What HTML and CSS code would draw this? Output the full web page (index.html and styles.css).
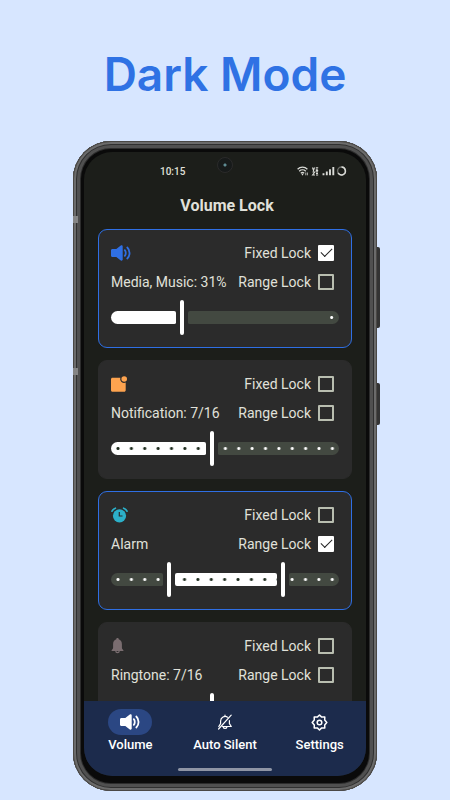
FILE: index.html
```
<!DOCTYPE html>
<html lang="en">
<head>
    <meta charset="utf-8">
    <meta name="viewport" content="width=device-width, initial-scale=1">
    <title>Volume Lock - Dark Mode</title>
    <link rel="stylesheet" href="styles.css">
</head>
<body>
    <h1>Dark Mode</h1>

    <div class="phone">
        <span class="side-button power"></span>
        <span class="side-button volume"></span>
        <span class="antenna antenna-top"></span>
        <span class="antenna antenna-mid"></span>

        <div class="screen">
            <span class="camera"></span>

            <div class="status-bar">
                <span>10:15</span>
                <svg width="50" height="12" viewBox="0 0 50 12" fill="none" stroke="#d9dad6">
                    <path d="M.6 4.2a7 7 0 0 1 9.8 0M2.2 6.2a4.8 4.8 0 0 1 6.6 0M3.8 8.2a2.6 2.6 0 0 1 3.4 0" stroke-width="1.3"/>
                    <circle cx="5.5" cy="9.6" r=".8" fill="#d9dad6" stroke="none"/>
                    <path d="M8.8 7.5v2.8M10.4 7.5v2.8" stroke-width=".8"/>
                    <path d="M15.5 2.5l1 3 1-3M18.8 2.7h2.4M18.8 4.2h2M18.8 5.6h2.4M15.5 7h2.3l-2.2 3h2.4M19 7h2M19 8.500h2M19 10h2.200" stroke-width="1.100"/>
                    <path d="M26.5 10.3v-2M29.8 10.3V6.500M33 10.300V4.300M36.300 10.300V2" stroke-width="1.900"/>
                    <circle cx="44.500" cy="6" r="3.900" stroke-width="1.500" stroke="#6a6c67"/>
                    <path d="M44.500 2.100a3.900 3.900 0 1 1-3.400 5.800" stroke-width="1.500"/>
                </svg>
            </div>

            <h2>Volume Lock</h2>

            <main>
                <section class="card active">
                    <div class="row">
                        <svg class="icon" width="20" height="16" viewBox="0 0 20 16" fill="#2f6fe4">
                            <path d="M1.500 4h3.800L9.800.6c.8-.6 1.900-.2 1.900.9v13c0 1.100-1.100 1.500-1.900.9L5.300 12H1.500C.5 12 0 11.400 0 10.500v-5C0 4.600.500 4 1.500 4z"/>
                            <path d="M13.800 5.200c1.300 1.400 1.300 4.200 0 5.600M16.300 2.500c3 2.800 3 8.200 0 11" fill="none" stroke="#2f6fe4" stroke-width="1.800" stroke-linecap="round"/>
                        </svg>
                        <label>Fixed Lock <input type="checkbox" checked></label>
                    </div>
                    <div class="row">
                        <span>Media, Music: 31%</span>
                        <label>Range Lock <input type="checkbox"></label>
                    </div>
                    <div class="slider plain" style="--to: 0.3">
                        <div class="track"><i class="low on"></i><i class="high"></i></div>
                        <input type="range" min="0" max="100" value="30" aria-label="Media volume">
                    </div>
                </section>

                <section class="card">
                    <div class="row">
                        <svg class="icon" width="17" height="16" viewBox="0 0 17 16" fill="#fda34f">
                            <path d="M1.500 1.800h7.800a4 4 0 0 0 5.400 4.800v7.600c0 .9-.600 1.500-1.500 1.500H1.500C.600 15.700 0 15.100 0 14.200V3.300c0-.9.600-1.500 1.500-1.500z"/>
                            <circle cx="13.200" cy="3" r="2.800"/>
                        </svg>
                        <label>Fixed Lock <input type="checkbox"></label>
                    </div>
                    <div class="row">
                        <span>Notification: 7/16</span>
                        <label>Range Lock <input type="checkbox"></label>
                    </div>
                    <div class="slider" style="--to: 0.4375">
                        <div class="track"><i class="low on"></i><i class="high"></i></div>
                        <input type="range" min="0" max="16" value="7" aria-label="Notification volume">
                    </div>
                </section>

                <section class="card active">
                    <div class="row">
                        <svg class="icon" width="17" height="16" viewBox="0 0 17 16">
                            <circle cx="8.500" cy="8.800" r="6.600" fill="#2cb0c9"/>
                            <path d="M1 4.200A6 6 0 0 1 4.400 1.200M16 4.200a6 6 0 0 0-3.400-3" fill="none" stroke="#2cb0c9" stroke-width="1.700" stroke-linecap="round"/>
                            <path d="M8.300 5v4h3.200" fill="none" stroke="#2b2b2b" stroke-width="1.200"/>
                        </svg>
                        <label>Fixed Lock <input type="checkbox"></label>
                    </div>
                    <div class="row">
                        <span>Alarm</span>
                        <label>Range Lock <input type="checkbox" checked></label>
                    </div>
                    <div class="slider range" style="--from: 0.24; --to: 0.77">
                        <div class="track"><i class="low"></i><i class="mid on"></i><i class="high"></i></div>
                        <input type="range" min="0" max="100" value="24" aria-label="Alarm minimum volume">
                        <input type="range" min="0" max="100" value="77" aria-label="Alarm maximum volume">
                    </div>
                </section>

                <section class="card">
                    <div class="row">
                        <svg class="icon" width="13" height="16" viewBox="0 0 13 16" fill="#7a6d70">
                            <path d="M6.500 0c.8 0 1.200.5 1.200 1.300 2 .6 3.200 2.300 3.200 4.600v3.600c0 1.200.6 1.900 1.500 2.700v.9H.600v-.9c.900-.8 1.500-1.500 1.500-2.700V5.900c0-2.300 1.200-4 3.200-4.600C5.300.5 5.700 0 6.500 0z"/>
                            <path d="M4.800 13a1.700 1.700 0 0 0 3.400 0" fill="none" stroke="#7a6d70" stroke-width="1.200"/>
                        </svg>
                        <label>Fixed Lock <input type="checkbox"></label>
                    </div>
                    <div class="row">
                        <span>Ringtone: 7/16</span>
                        <label>Range Lock <input type="checkbox"></label>
                    </div>
                    <div class="slider" style="--to: 0.4375">
                        <div class="track"><i class="low on"></i><i class="high"></i></div>
                        <input type="range" min="0" max="16" value="7" aria-label="Ringtone volume">
                    </div>
                </section>
            </main>

            <nav>
                <a href="#volume" class="current">
                    <span class="pill">
                        <svg width="20" height="16" viewBox="0 0 20 16" fill="#fff">
                            <path d="M1.500 4h3.800L9.800.6c.8-.6 1.900-.2 1.900.9v13c0 1.100-1.100 1.500-1.900.9L5.300 12H1.500C.5 12 0 11.400 0 10.500v-5C0 4.600.500 4 1.500 4z"/>
                            <path d="M13.800 5.200c1.300 1.400 1.300 4.200 0 5.600M16.300 2.500c3 2.800 3 8.200 0 11" fill="none" stroke="#fff" stroke-width="1.800" stroke-linecap="round"/>
                        </svg>
                    </span>
                    Volume
                </a>
                <a href="#auto-silent">
                    <span class="pill">
                        <svg width="16" height="16" viewBox="0 0 16 16" fill="none" stroke="#fff" stroke-width="1.200" stroke-linecap="round" stroke-linejoin="round">
                            <path d="M10.600 3.200A4.600 4.600 0 0 0 3.600 7v2.600L1.800 12.500M5.500 12.500h8.800L12.400 9.600V6.500M6.200 13a1.900 1.900 0 0 0 3.700 0M8 1.200v1M14.200 1.200L1.600 15"/>
                        </svg>
                    </span>
                    Auto Silent
                </a>
                <a href="#settings">
                    <span class="pill">
                        <svg width="17" height="17" viewBox="0 0 17 17" fill="none" stroke="#fff" stroke-width="1.500" stroke-linejoin="round">
                            <path d="M8.500 1l2.200 2.100 3.100-.1-.1 3.100 2.100 2.400-2.100 2.400.1 3.100-3.100-.1-2.200 2.100-2.200-2.100-3.100.1.1-3.100L1.200 8.500l2.100-2.400L3.200 3l3.100.1z"/>
                            <circle cx="8.500" cy="8.500" r="2.300"/>
                        </svg>
                    </span>
                    Settings
                </a>
                <span class="home-bar"></span>
            </nav>
        </div>
    </div>
</body>
</html>
```
FILE: styles.css
```
* {
    box-sizing: border-box;
}

body {
    margin: 0;
    padding: 44px 16px 9px;
    height: 100vh;
    display: flex;
    flex-direction: column;
    align-items: center;
    background-color: #d7e6ff;
    font-family: Roboto, "Liberation Sans", sans-serif;
}

h1 {
    margin: 0 0 37px;
    font-family: Inter, "Open Sans", sans-serif;
    font-size: 46px;
    font-weight: 600;
    line-height: 60px;
    color: #2f72e4;
}

/* Phone frame */
.phone {
    position: relative;
    flex: 1;
    min-height: 0;
    width: 100%;
    max-width: 304px;
    padding: 11px 11px 15px;
    border-radius: 38px;
    background-color: #0a0a0a;
    box-shadow:
        inset 0 0 0 1px #4a4845,
        inset 0 0 0 3px #6b6b6b,
        inset 0 0 0 4px #303030,
        inset 0 0 0 7px #505050,
        inset 0 0 0 8px #2c2c2c;
}

.side-button {
    position: absolute;
    left: 100%;
    width: 3px;
    border-radius: 0 2px 2px 0;
    background-color: #333;
}

.power {
    top: 106px;
    height: 81px;
}

.volume {
    top: 242px;
    height: 42px;
}

.antenna {
    position: absolute;
    left: 0;
    width: 5px;
    height: 7px;
    background-color: #858585;
}

.antenna-top {
    top: 75px;
}

.antenna-mid {
    top: 227px;
}

.screen {
    position: relative;
    height: 100%;
    display: flex;
    flex-direction: column;
    overflow: hidden;
    border-radius: 28px;
    background-color: #1c1e1a;
    color: #e0e1da;
}

.camera {
    position: absolute;
    top: 5px;
    left: 50%;
    width: 16px;
    height: 16px;
    margin-left: -8px;
    border: 1px solid #2b2b2b;
    border-radius: 50%;
    background: radial-gradient(circle, #5e8b93 1px, #171a1a 2px);
}

.status-bar {
    display: flex;
    justify-content: space-between;
    align-items: center;
    height: 38px;
    padding: 0 19px 0 76px;
    font-size: 10px;
    font-weight: 500;
}

h2 {
    margin: 0;
    padding-left: 4px;
    font-size: 16px;
    font-weight: 700;
    line-height: 32px;
    text-align: center;
}

main {
    flex: 1;
    min-height: 0;
    overflow: hidden;
    display: flex;
    flex-direction: column;
    gap: 12px;
    padding: 7px 14px 0;
}

/* Volume cards */
.card {
    flex: none;
    padding: 8px 12px 12px;
    border: 1px solid #2b2b2b;
    border-radius: 9px;
    background-color: #2b2b2b;
}

.card.active {
    border-color: #2f6fe4;
}

.row {
    display: flex;
    justify-content: space-between;
    align-items: center;
    height: 29px;
    padding-right: 5px;
    font-size: 14px;
    white-space: nowrap;
}

.row label {
    display: flex;
    align-items: center;
    gap: 7px;
}

.icon {
    overflow: visible;
}

input[type="checkbox"] {
    appearance: none;
    width: 16px;
    height: 16px;
    margin: 0;
    border: 2px solid #b9beb0;
    border-radius: 1px;
}

input[type="checkbox"]:checked {
    display: grid;
    place-items: center;
    border-color: #fff;
    background-color: #fff;
}

input[type="checkbox"]:checked::after {
    content: "";
    width: 10px;
    height: 5px;
    margin-bottom: 3px;
    border: solid #222;
    border-width: 0 0 1px 1px;
    transform: rotate(-45deg);
}

/* Sliders: the track is drawn by the segments, the inputs draw the handles */
.slider {
    position: relative;
    container-type: inline-size;
    height: 35px;
    margin-top: 4px;
}

.track {
    --run: calc(100cqw - 14px);
    --step: calc(var(--run) / 16);
    --shift: calc(7px - var(--step) / 2);
    display: grid;
    grid-template-columns: calc(1px + var(--run) * var(--to)) 1fr;
    column-gap: 12px;
    align-items: center;
    height: 35px;
}

.range .track {
    grid-template-columns: calc(1px + var(--run) * var(--from)) calc(var(--run) * (var(--to) - var(--from)) - 12px) 1fr;
}

.track i {
    height: 13px;
    border-radius: 2px;
    background-color: #434941;
    background-image: radial-gradient(circle, #fff 1px, transparent 2px);
    background-size: var(--step) 100%;
}

.track .low {
    border-radius: 7px 2px 2px 7px;
    background-position-x: var(--shift);
}

.track .mid {
    background-position-x: calc(var(--shift) - 13px - var(--run) * var(--from));
}

.track .high {
    border-radius: 2px 7px 7px 2px;
    background-position-x: calc(100% - var(--shift));
}

.track .on {
    background-color: #fff;
    background-image: radial-gradient(circle, #1c2a1c 1px, transparent 2px);
}

.plain .low {
    background-image: none;
}

.plain .high {
    background-repeat: no-repeat;
}

input[type="range"] {
    appearance: none;
    position: absolute;
    inset: 0;
    width: 100%;
    height: 35px;
    margin: 0;
    background: none;
    pointer-events: none;
}

input[type="range"]::-webkit-slider-thumb {
    appearance: none;
    width: 14px;
    height: 35px;
    border: solid transparent;
    border-width: 0 5px;
    border-radius: 7px / 2px;
    background-color: #fff;
    background-clip: padding-box;
    pointer-events: auto;
}

/* Bottom navigation */
nav {
    display: grid;
    grid-template-columns: repeat(3, 1fr);
    column-gap: 2px;
    height: 75px;
    padding-top: 8px;
    background-color: #1c2b4c;
}

nav a {
    display: flex;
    flex-direction: column;
    align-items: center;
    color: #fff;
    font-size: 13px;
    font-weight: 500;
    line-height: 20px;
    text-decoration: none;
}

.pill {
    display: grid;
    place-items: center;
    width: 44px;
    height: 26px;
    border-radius: 13px;
}

.current .pill {
    background-color: #2b4783;
}

.home-bar {
    grid-column: 1 / -1;
    justify-self: center;
    align-self: end;
    width: 94px;
    height: 3px;
    margin-bottom: 5px;
    border-radius: 2px;
    background-color: #8f95a5;
}
```
